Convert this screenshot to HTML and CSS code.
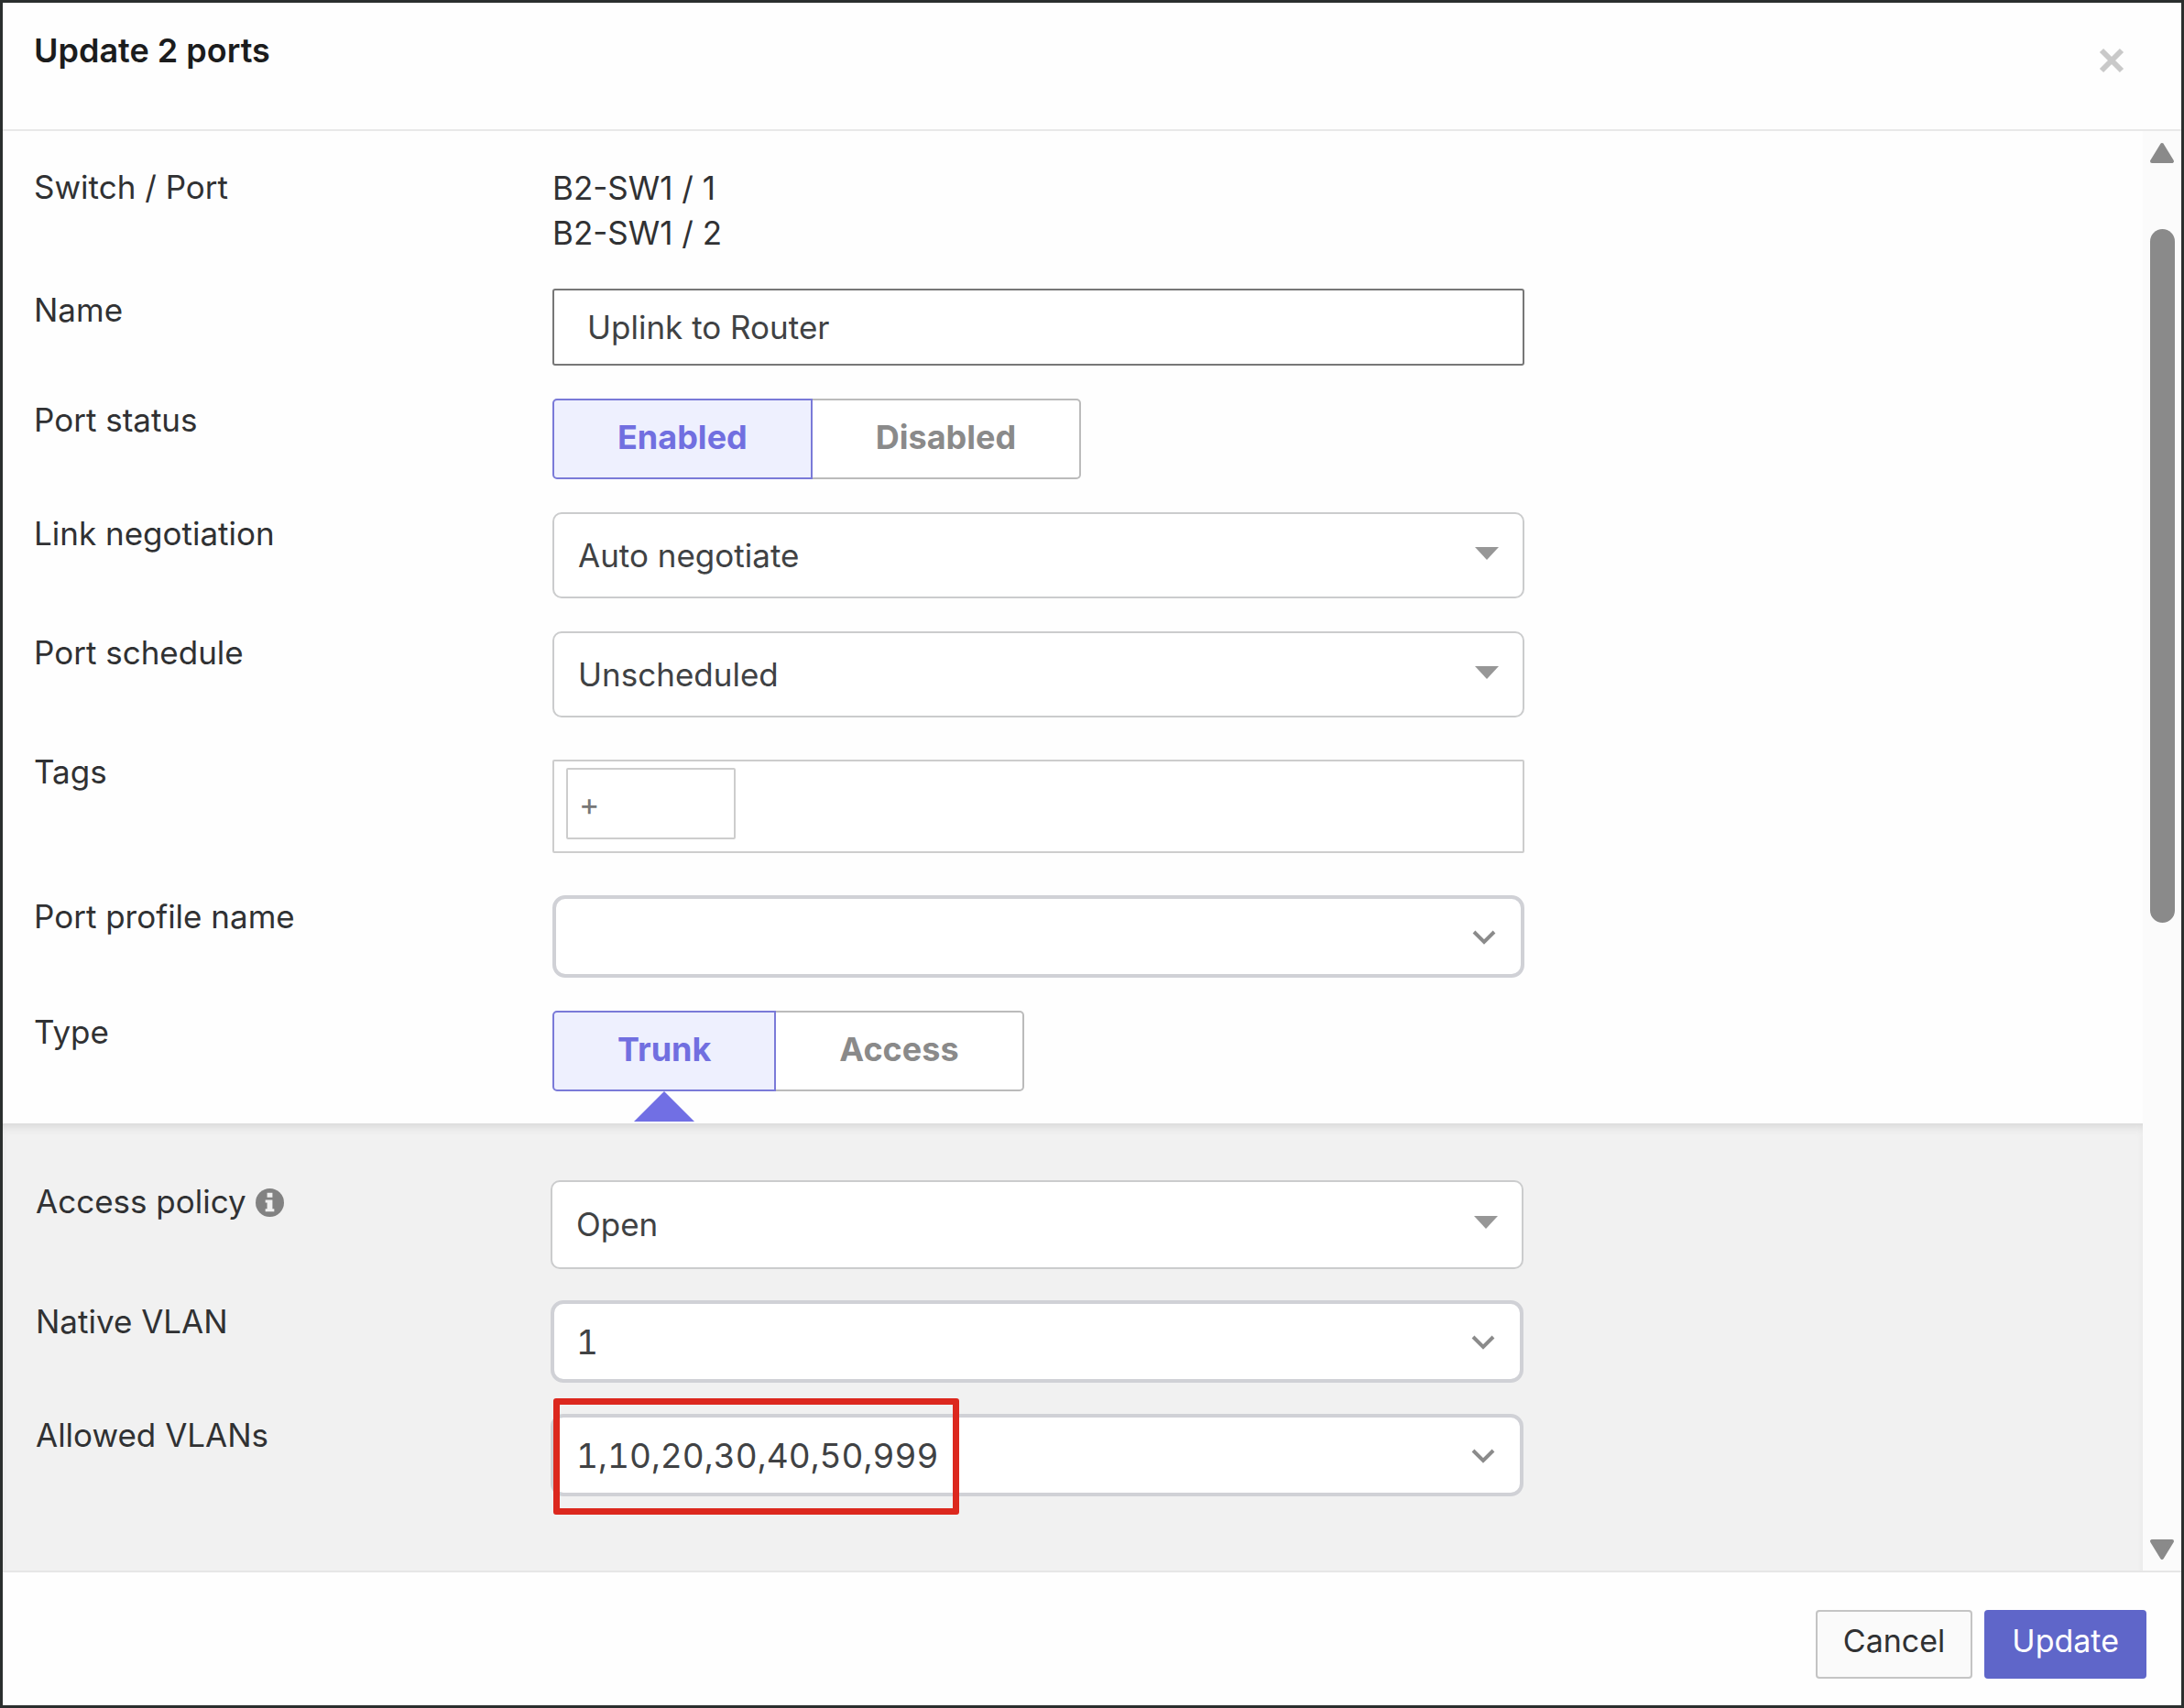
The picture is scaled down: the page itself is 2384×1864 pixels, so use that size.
FILE: index.html
```html
<!DOCTYPE html>
<html lang="en">
<head>
  <meta charset="UTF-8" />
  <meta name="viewport" content="width=device-width, initial-scale=1" />
  <title>Update 2 ports</title>
  <link rel="stylesheet" href="styles.css">
</head>
<body>

<form class="dialog" role="dialog" aria-labelledby="dialogTitle">

  <!-- Header -->
  <header class="dialog-header">
    <h1 id="dialogTitle">Update 2 ports</h1>
    <button type="button" class="close" aria-label="Close">
      <svg width="28" height="28" viewBox="0 0 28 28"><path d="M3 3L25 25M25 3L3 25" /></svg>
    </button>
  </header>

  <!-- Scrolling body -->
  <div class="dialog-body">
    <div class="content">
      <div class="fields">
        <div class="row">
          <span class="label">Switch / Port</span>
          <div class="ports">B2-SW1 / 1<br>B2-SW1 / 2</div>
        </div>

        <div class="row">
          <label class="label" for="name">Name</label>
          <input type="text" id="name" class="control name" value="Uplink to Router">
        </div>

        <div class="row">
          <span class="label" id="statusLabel">Port status</span>
          <div class="toggle" role="group" aria-labelledby="statusLabel">
            <button type="button" class="active" aria-pressed="true">Enabled</button>
            <button type="button" aria-pressed="false">Disabled</button>
          </div>
        </div>

        <div class="row">
          <label class="label" for="link">Link negotiation</label>
          <div class="picker">
            <select id="link" class="control select"><option>Auto negotiate</option></select>
            <svg class="caret" width="26" height="14" viewBox="0 0 26 14"><path d="M0 0H26L13 14Z" /></svg>
          </div>
        </div>

        <div class="row">
          <label class="label" for="schedule">Port schedule</label>
          <div class="picker">
            <select id="schedule" class="control select"><option>Unscheduled</option></select>
            <svg class="caret" width="26" height="14" viewBox="0 0 26 14"><path d="M0 0H26L13 14Z" /></svg>
          </div>
        </div>

        <div class="row">
          <label class="label" for="tags">Tags</label>
          <div class="tags">
            <input type="text" id="tags" placeholder="+">
          </div>
        </div>

        <div class="row">
          <label class="label" for="profile">Port profile name</label>
          <div class="picker">
            <input type="text" id="profile" class="control combo">
            <svg class="chevron" width="26" height="16" viewBox="0 0 26 16"><path d="M2 2L13 13L24 2" /></svg>
          </div>
        </div>

        <div class="row">
          <span class="label" id="typeLabel">Type</span>
          <div class="toggle" role="group" aria-labelledby="typeLabel">
            <button type="button" class="active pointer" aria-pressed="true">Trunk</button>
            <button type="button" aria-pressed="false">Access</button>
          </div>
        </div>
      </div>

      <!-- Trunk settings -->
      <div class="fields trunk">
        <div class="row">
          <label class="label" for="policy">Access policy
            <svg class="info" width="31" height="31" viewBox="0 0 32 32">
              <circle cx="16" cy="16" r="16" />
              <path d="M13 5H19V10H13ZM11 13H19V23H21V26H11V23H13V16H11Z" />
            </svg>
          </label>
          <div class="picker">
            <select id="policy" class="control select"><option>Open</option></select>
            <svg class="caret" width="26" height="14" viewBox="0 0 26 14"><path d="M0 0H26L13 14Z" /></svg>
          </div>
        </div>

        <div class="row">
          <label class="label" for="native">Native VLAN</label>
          <div class="picker">
            <input type="text" id="native" class="control combo" value="1">
            <svg class="chevron" width="26" height="16" viewBox="0 0 26 16"><path d="M2 2L13 13L24 2" /></svg>
          </div>
        </div>

        <div class="row">
          <label class="label" for="allowed">Allowed VLANs</label>
          <div class="picker">
            <input type="text" id="allowed" class="control combo" value="1,10,20,30,40,50,999">
            <svg class="chevron" width="26" height="16" viewBox="0 0 26 16"><path d="M2 2L13 13L24 2" /></svg>
            <div class="highlight"></div>
          </div>
        </div>
      </div>
    </div>

    <div class="scrollbar" aria-hidden="true">
      <svg width="28" height="24" viewBox="0 0 28 24"><path d="M14 3L25 21H3Z" /></svg>
      <div class="track"><div class="thumb"></div></div>
      <svg width="28" height="24" viewBox="0 0 28 24"><path d="M14 21L3 3H25Z" /></svg>
    </div>
  </div>

  <!-- Footer -->
  <footer class="dialog-footer">
    <button type="button" class="btn">Cancel</button>
    <button type="submit" class="btn primary">Update</button>
  </footer>
</form>

</body>
</html>
```
FILE: styles.css
```css
* {
  box-sizing: border-box;
}

body {
  margin: 0;
  background: #d5dcd8;
  color: #303133;
  font-family: Inter, "Liberation Sans", sans-serif;
  font-size: 35px;
  line-height: 49px;
}

button,
input,
select {
  margin: 0;
  font: inherit;
  color: inherit;
}

button {
  cursor: pointer;
}

.dialog {
  display: flex;
  flex-direction: column;
  min-height: 100vh;
  border: 3px solid #2b2f2e;
  background: #fefefe;
}

/* Header */
.dialog-header {
  display: flex;
  justify-content: space-between;
  align-items: flex-start;
  height: 140px;
  padding: 25px 38px 0 34px;
  border-bottom: 2px solid #e8e8e8;
}

.dialog-header h1 {
  margin: 3px 0 0;
  color: #1b1c1d;
  font-size: 36px;
  font-weight: 600;
}

.close {
  display: flex;
  align-items: center;
  justify-content: center;
  width: 76px;
  height: 76px;
  padding: 0;
  border: none;
  background: none;
}

.close path {
  fill: none;
  stroke: #c9c9c9;
  stroke-width: 6;
}

/* Body */
.dialog-body {
  display: flex;
  flex: 1;
}

.content {
  display: flex;
  flex-direction: column;
  flex: 1;
}

.fields {
  display: flex;
  flex-direction: column;
  gap: 36px;
  padding: 38px 0 35px 34px;
}

.row {
  display: grid;
  grid-template-columns: 566px 11fr 7fr;
  align-items: start;
}

.label {
  line-height: 46px;
}

.control {
  display: block;
  width: 100%;
  outline: none;
  appearance: none;
  background: #fff;
  color: #404244;
}

.name {
  height: 84px;
  padding: 0 36px;
  border: 2px solid #777;
  border-radius: 3px;
}

.picker {
  position: relative;
}

.select {
  height: 94px;
  padding: 0 80px 0 26px;
  border: 2px solid #cbcccd;
  border-radius: 10px;
}

.combo {
  height: 90px;
  padding: 0 80px 0 24px;
  border: 4px solid #d0d1d6;
  border-radius: 14px;
  font-size: 37px;
  font-variant-numeric: tabular-nums;
}

.caret {
  position: absolute;
  right: 28px;
  top: 40%;
  fill: #979797;
}

.chevron {
  position: absolute;
  right: 31px;
  top: 38px;
  fill: none;
  stroke: #8b8b8b;
  stroke-width: 4;
}

/* Segmented toggle */
.toggle {
  display: flex;
}

.toggle button {
  position: relative;
  height: 88px;
  padding: 0 69px 4px;
  border: 2px solid #bbb;
  border-left: none;
  border-radius: 0 5px 5px 0;
  background: #fff;
  color: #8a8a8a;
  font-size: 36px;
  font-weight: 700;
}

.toggle .active {
  border: 2px solid #7a7ad8;
  border-radius: 5px 0 0 5px;
  background: #eef0fe;
  color: #716fe0;
}

.toggle .pointer::after {
  content: "";
  position: absolute;
  top: 86px;
  left: 50%;
  margin-left: -33px;
  border: 33px solid transparent;
  border-top: none;
  border-bottom-color: #716fe4;
}

/* Tags */
.tags {
  height: 102px;
  margin: 10px 0;
  padding: 7px 13px;
  border: 2px solid #cdcdcd;
  border-radius: 2px;
  background: #fff;
}

.tags input {
  display: block;
  width: 185px;
  height: 78px;
  padding: 0 12px;
  border: 2px solid #cdcdcd;
  border-radius: 2px;
  font-size: 34px;
}

.tags input::placeholder {
  color: #777;
}

/* Trunk settings */
.trunk {
  flex: 1;
  gap: 34px;
  padding: 62px 0 80px 36px;
  background: #f1f1f1;
  box-shadow: inset 0 8px 12px -6px #d0d0d0;
}

.trunk .row {
  grid-template-columns: 562px 11fr 7fr;
}

.trunk .select {
  height: 97px;
}

.info {
  vertical-align: -4px;
  fill: #828282;
}

.info path {
  fill: #f1f1f1;
}

.highlight {
  position: absolute;
  top: -17px;
  left: 3px;
  width: 443px;
  height: 127px;
  border: 7px solid #dc281e;
  border-radius: 3px;
  pointer-events: none;
}

/* Scrollbar */
.scrollbar {
  display: flex;
  flex-direction: column;
  align-items: center;
  width: 42px;
  padding: 12px 0 11px;
  background: #fbfbfb;
}

.scrollbar svg {
  fill: #8a8a8a;
  stroke: #8a8a8a;
  stroke-width: 4;
  stroke-linejoin: round;
}

.track {
  flex: 1;
  padding-top: 71px;
}

.thumb {
  width: 27px;
  height: 53%;
  border-radius: 14px;
  background: #8a8a8a;
}

/* Footer */
.dialog-footer {
  display: flex;
  justify-content: flex-end;
  gap: 13px;
  padding: 41px 38px 29px;
  border-top: 2px solid #e6e6e6;
}

.btn {
  height: 75px;
  padding: 0 28px 8px;
  border: 2px solid #c4c4c4;
  border-radius: 4px;
  background: #fafafa;
  font-size: 34px;
}

.primary {
  border-color: #5f66c9;
  background: #5f66c9;
  color: #fff;
}
```
